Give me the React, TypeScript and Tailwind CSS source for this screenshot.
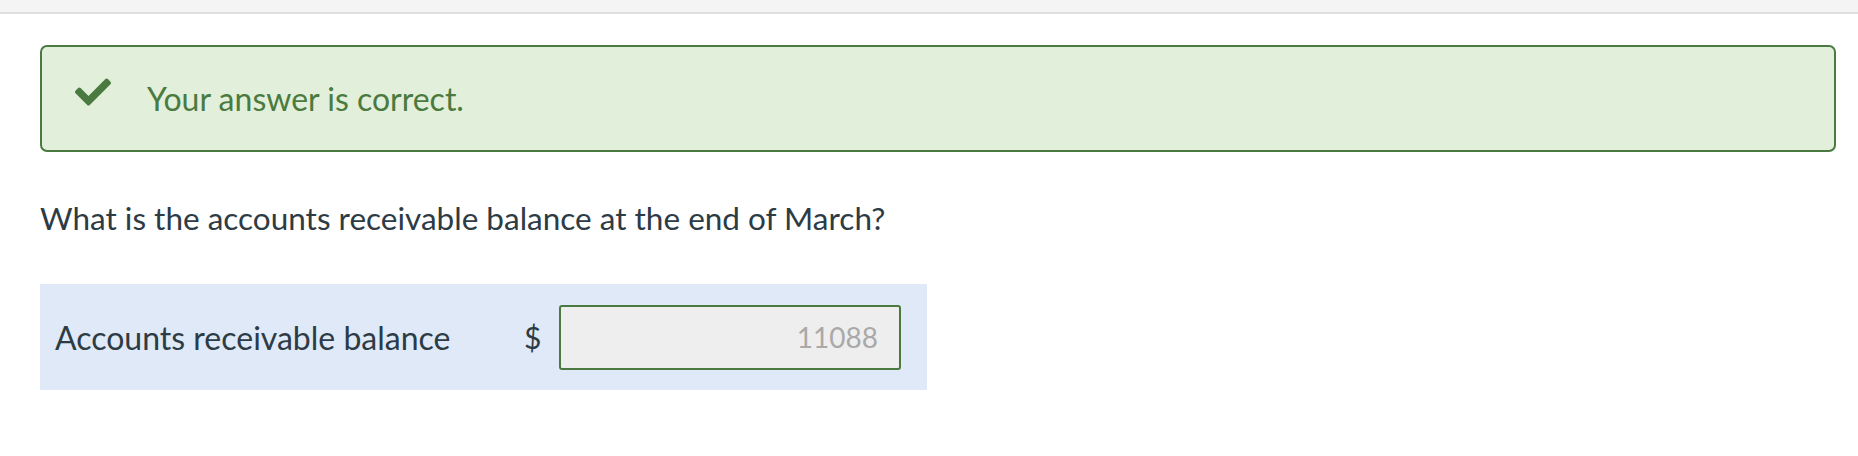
import React from "react";
import { FaCheck } from "react-icons/fa";

export default function App() {
  return (
    <div className="w-[1858px] h-[456px] bg-white" style={{ fontFamily: "Lato, 'Open Sans', sans-serif" }}>
      <div className="h-[14px] bg-[#f4f4f4] border-b-2 border-[#e0e0e0]" />
      <div className="pl-[40px] pr-[22px]">
        <div className="mt-[31px] h-[107px] border-2 border-[#4b7a40] rounded-[7px] bg-[#e2efda] flex items-center pl-[33px]">
          <FaCheck className="text-[#4b7a40] w-[36px] h-[36px] mb-[13px] shrink-0" />
          <span className="ml-[36px] text-[32px] leading-[37px] text-[#4a7a40]">Your answer is correct.</span>
        </div>
        <div className="mt-[48px] text-[31.5px] leading-[37px] text-[#2d3b45]">
          What is the accounts receivable balance at the end of March?
        </div>
        <div className="mt-[47px] w-[887px] h-[106px] bg-[#dfe9f7] flex items-center pl-[15px]">
          <span className="w-[469px] text-[32px] leading-[37px] text-[#2d3b45]">Accounts receivable balance</span>
          <span className="w-[19px] text-[30px] leading-[37px] text-[#2d3b45]">$</span>
          <div className="ml-[16px] w-[342px] h-[65px] border-2 border-[#4b7a40] rounded-[3px] bg-[#eeeeee] flex items-center justify-end pr-[21px] text-[28px] text-[#a9a9a9]">
            11088
          </div>
        </div>
      </div>
    </div>
  );
}
